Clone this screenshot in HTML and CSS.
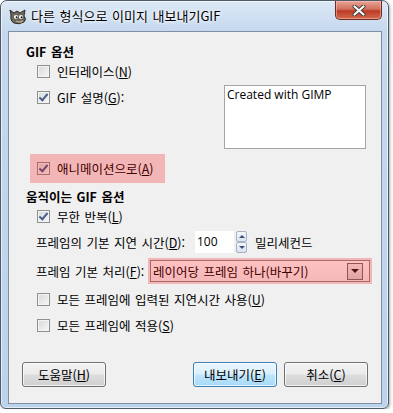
FILE: index.html
```html
<!DOCTYPE html>
<html lang="ko">
<head>
  <meta charset="UTF-8" />
  <link rel="stylesheet" href="styles.css">
</head>
<body>
  <div class="window">
    <div class="titlebar">
      <svg class="app-icon" width="19" height="17" viewBox="0 0 19 17">
        <path d="M2 6 L1 1 L5 4 L8 2 L11 4 L16 1 L15 7 Q18 10 15 13 Q10 16 5 14 Q1 12 2 6 Z" fill="#6d665a" stroke="#2e2a24" stroke-width="1"/>
        <ellipse cx="7" cy="8" rx="2.6" ry="2.4" fill="#fff" stroke="#222" stroke-width=".6"/>
        <ellipse cx="12" cy="8" rx="2.6" ry="2.4" fill="#fff" stroke="#222" stroke-width=".6"/>
        <circle cx="7.6" cy="8.3" r="1" fill="#111"/>
        <circle cx="12.6" cy="8.3" r="1" fill="#111"/>
        <path d="M7 12 Q10 14 14 12" fill="none" stroke="#b7ab8e" stroke-width="1.4"/>
      </svg>
      <span class="title">다른 형식으로 이미지 내보내기GIF</span>
      <div class="close">
        <svg width="14" height="11" viewBox="0 0 14 11">
          <path d="M2.5 1.5 L11.5 9.5 M11.5 1.5 L2.5 9.5" stroke="#3b3b3b" stroke-width="4" stroke-linecap="round"/>
          <path d="M2.5 1.5 L11.5 9.5 M11.5 1.5 L2.5 9.5" stroke="#fff" stroke-width="2.2" stroke-linecap="round"/>
        </svg>
      </div>
    </div>

    <div class="client">
      <div class="section-title first">GIF 옵션</div>

      <div class="gif-block">
        <div class="gif-rows">
          <label class="check-row row-a"><span class="box"></span>인터레이스(<u>N</u>)</label>
          <label class="check-row row-b"><span class="box checked"></span>GIF 설명(<u>G</u>):</label>
        </div>
        <div class="comment">Created with GIMP</div>
      </div>

      <div class="marked anim">
        <label class="check-row"><span class="box checked"></span>애니메이션으로(<u>A</u>)</label>
      </div>

      <div class="section-title second">움직이는 GIF 옵션</div>

      <label class="check-row loop"><span class="box checked"></span>무한 반복(<u>L</u>)</label>

      <div class="field-row delay">
        <span class="delay-label">프레임의 기본 지연 시간(<u>D</u>):</span>
        <div class="spin">
          <span class="spin-value">100</span>
          <div class="spin-btns">
            <span class="spin-btn"><i class="arrow up"></i></span>
            <span class="spin-btn"><i class="arrow down"></i></span>
          </div>
        </div>
        <span class="unit">밀리세컨드</span>
      </div>

      <div class="field-row dispose">
        <span class="dispose-label">프레임 기본 처리(<u>F</u>):</span>
        <div class="marked combo-wrap">
          <div class="combo">
            <span class="combo-text">레이어당 프레임 하나(바꾸기)</span>
            <span class="combo-btn"><i class="arrow down big"></i></span>
          </div>
        </div>
      </div>

      <label class="check-row all-delay"><span class="box"></span>모든 프레임에 입력된 지연시간 사용(<u>U</u>)</label>
      <label class="check-row all-apply"><span class="box"></span>모든 프레임에 적용(<u>S</u>)</label>

      <div class="buttons">
        <button class="btn">도움말(<u>H</u>)</button>
        <button class="btn default push">내보내기(<u>E</u>)</button>
        <button class="btn">취소(<u>C</u>)</button>
      </div>
    </div>
  </div>
</body>
</html>
```

FILE: styles.css
```css
body {
  margin: 0;
  background: #ffffff;
  font-family: "Noto Sans CJK KR", sans-serif;
  font-size: 12.5px;
  word-spacing: 1px;
  color: #000;
}

.window {
  box-sizing: border-box;
  width: 389px;
  height: 409px;
  padding: 0 6px 0 7px;
  border: 1px solid #4e5a6a;
  border-radius: 7px 7px 6px 6px;
  background: linear-gradient(#dce8f5, #c5d8ee 30px, #bcd3ec);
  box-shadow: 1px 1px 3px rgba(0, 0, 0, 0.35), inset 0 0 0 1px rgba(255, 255, 255, 0.6);
}

.titlebar {
  height: 30px;
  display: flex;
  align-items: flex-start;
}

.app-icon {
  margin: 8px 0 0 1px;
}

.title {
  margin: 7px 0 0 3px;
  line-height: 16px;
  font-size: 13px;
  text-shadow: 0 0 6px #fff, 0 0 3px #fff;
}

.close {
  margin-left: auto;
  width: 47px;
  height: 19px;
  box-sizing: border-box;
  border: 1px solid #6b2a22;
  border-top: none;
  border-radius: 0 0 5px 5px;
  background: linear-gradient(#e8a597, #d2705f 45%, #bd3a23 55%, #d26a4d);
  display: flex;
  align-items: center;
  justify-content: center;
  box-shadow: inset 0 0 0 1px rgba(255, 200, 190, 0.5);
}

.client {
  box-sizing: border-box;
  height: 373px;
  border: 1px solid #7f8ea3;
  background: #f0f0f0;
  padding-top: 11px;
  display: flex;
  flex-direction: column;
  align-items: flex-start;
}

.section-title {
  font-weight: bold;
  height: 18px;
  line-height: 18px;
  padding-left: 17px;
}

.section-title.second {
  margin-top: 5px;
}

.check-row {
  display: flex;
  align-items: center;
  padding-left: 28px;
  white-space: nowrap;
}

.box {
  box-sizing: border-box;
  width: 13px;
  height: 13px;
  margin-right: 7px;
  border: 1px solid #8e8f8f;
  background: linear-gradient(135deg, #d8d8d8, #f7f7f7);
  box-shadow: inset 0 0 0 1px #f4f4f4;
  position: relative;
}

.box.checked::after {
  content: "";
  position: absolute;
  left: 3px;
  top: 0px;
  width: 3px;
  height: 7px;
  border: solid #4a5d8c;
  border-width: 0 2px 2px 0;
  transform: rotate(40deg);
}

.gif-block {
  display: flex;
  align-self: stretch;
  height: 88px;
}

.gif-rows {
  display: flex;
  flex-direction: column;
}

.row-a {
  height: 20px;
}

.row-b {
  height: 32px;
}

.comment {
  box-sizing: border-box;
  margin: 24px 15px 0 auto;
  width: 142px;
  height: 64px;
  border: 1px solid #a5a5a5;
  background: #fff;
  padding: 1px 2px;
  line-height: 16px;
  font-family: "Open Sans", sans-serif;
  font-size: 12px;
  word-spacing: 0;
}

.marked {
  position: relative;
}

.marked::after {
  content: "";
  position: absolute;
  inset: 0;
  background: rgba(255, 0, 0, 0.24);
}

.anim {
  margin: 5px 0 0 21px;
  width: 135px;
  height: 29px;
  display: flex;
  align-items: center;
}

.anim .check-row {
  padding-left: 7px;
}

.loop {
  height: 20px;
}

.field-row {
  display: flex;
  align-items: center;
  padding-left: 27px;
  white-space: nowrap;
}

.delay {
  height: 32px;
}

.delay-label {
  width: 159px;
}

.spin {
  display: flex;
  align-items: stretch;
  height: 22px;
}

.spin-value {
  width: 39px;
  background: #fff;
  line-height: 22px;
  padding-left: 2px;
  box-sizing: border-box;
  font-family: "Open Sans", sans-serif;
  font-size: 12px;
}

.spin-btns {
  display: flex;
  flex-direction: column;
  margin-left: 2px;
}

.spin-btn {
  box-sizing: border-box;
  width: 11px;
  height: 11px;
  border: 1px solid #a7b3c4;
  border-radius: 2px;
  background: linear-gradient(#f4f7fb, #dbe3ee);
  display: flex;
  align-items: center;
  justify-content: center;
}

.arrow {
  width: 0;
  height: 0;
  border-left: 3px solid transparent;
  border-right: 3px solid transparent;
}

.arrow.up {
  border-bottom: 3px solid #3c4f7c;
}

.arrow.down {
  border-top: 3px solid #3c4f7c;
}

.arrow.big {
  border-left-width: 4px;
  border-right-width: 4px;
  border-top: 4px solid #1a1a1a;
}

.unit {
  margin-left: 8px;
}

.dispose {
  height: 26px;
}

.dispose-label {
  width: 112px;
}

.combo-wrap {
  box-sizing: border-box;
  width: 224px;
  height: 26px;
  padding: 2px;
}

.combo {
  box-sizing: border-box;
  height: 22px;
  border: 1px solid #8c8c8c;
  background: linear-gradient(#ffffff, #f2f2f2);
  display: flex;
  align-items: center;
  padding-left: 2px;
}

.combo-btn {
  margin-left: auto;
  margin-right: 6px;
  box-sizing: border-box;
  width: 16px;
  height: 17px;
  border: 1px solid #707070;
  background: linear-gradient(#f0f0f0, #d8d8d8);
  display: flex;
  align-items: center;
  justify-content: center;
}

.all-delay {
  height: 30px;
}

.all-apply {
  height: 22px;
}

.buttons {
  box-sizing: border-box;
  align-self: stretch;
  display: flex;
  gap: 7px;
  padding: 0 13px;
  margin-top: 26px;
}

.btn {
  box-sizing: border-box;
  width: 84px;
  height: 25px;
  padding: 0;
  border: 1px solid #707070;
  border-radius: 3px;
  background: linear-gradient(#f2f2f2, #ebebeb 48%, #dddddd 52%, #cfcfcf);
  box-shadow: inset 0 0 0 1px rgba(255, 255, 255, 0.7);
  font-family: "Noto Sans CJK KR", sans-serif;
  font-size: 12.5px;
  color: #000;
}

.btn.default {
  border-color: #3c7fb1;
  background: linear-gradient(#eaf6fd, #d9f0fc 48%, #bee6fd 52%, #a7d9f5);
}

.btn.push {
  margin-left: auto;
}
```
